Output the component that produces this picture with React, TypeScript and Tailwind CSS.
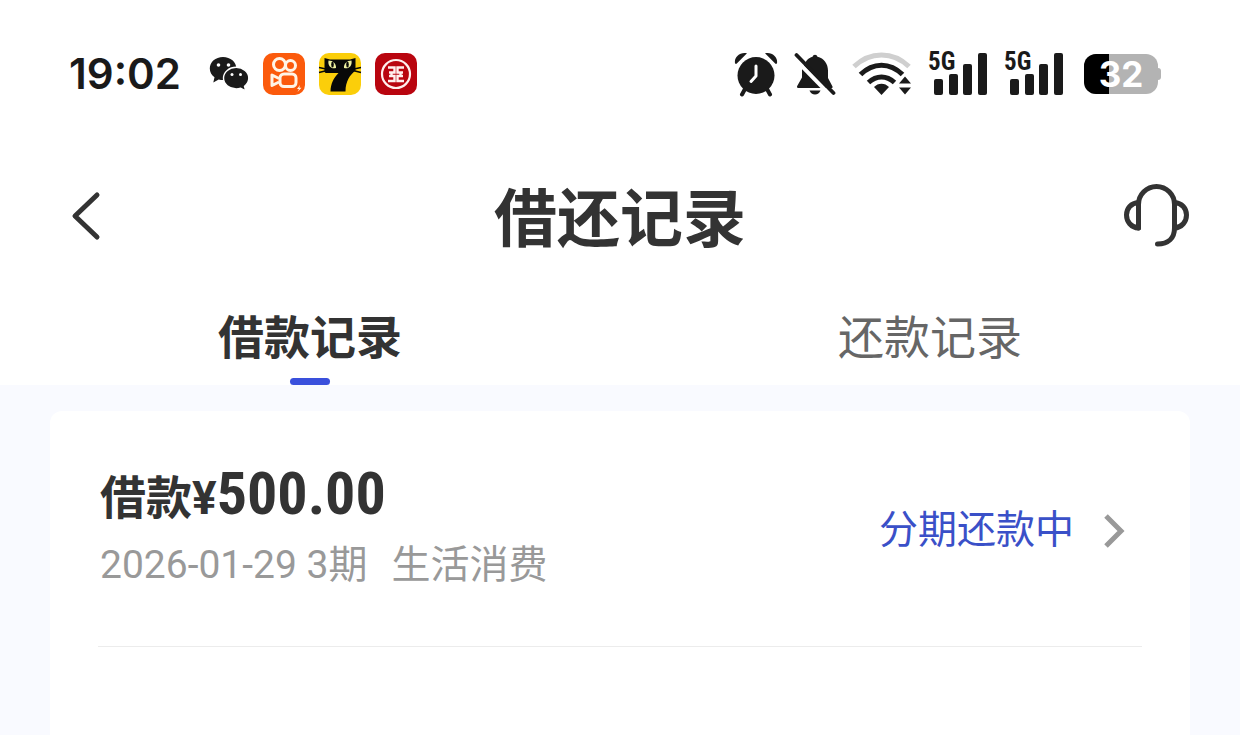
const cjk = "font-['Roboto','Noto_Sans_CJK_SC',sans-serif]"

function WechatIcon() {
  return (
    <svg viewBox="0 0 40 36" className="w-10 h-9" role="img" aria-label="微信">
      <path fill="#1a1a1a" d="M14 1C6.500 1 .8 6 .8 12.500c0 3.600 1.800 6.700 4.700 8.800L4.300 26.500l5.400-2.900c1.500.4 3 .5 4.600.5C21.500 24 27.400 19 27.400 12.500S21.500 1 14 1Z" />
      <path fill="#1a1a1a" stroke="#fff" strokeWidth="1.400" d="M27.200 11.300c-7 0-12.700 4.700-12.700 10.800s5.700 10.800 12.700 10.800c1.600 0 3.100-.2 4.500-.7l5 2.600-1.200-4.500c2.700-2 4.300-4.900 4.300-8.200 0-6.100-5.700-10.800-12.600-10.800Z" />
      <circle cx="9.500" cy="9" r="1.800" fill="#fff" />
      <circle cx="19.500" cy="9" r="1.800" fill="#fff" />
      <circle cx="23" cy="18.500" r="1.500" fill="#fff" />
      <circle cx="31.500" cy="18.500" r="1.500" fill="#fff" />
    </svg>
  )
}

function KuaishouIcon() {
  return (
    <svg viewBox="0 0 42 42" className="size-[42px]" role="img" aria-label="快手">
      <rect width="42" height="42" rx="10" fill="#fb5a0c" />
      <g fill="none" stroke="#fff4e6" strokeWidth="3">
        <circle cx="16.500" cy="11.500" r="6" />
        <circle cx="27.500" cy="12.500" r="5" />
        <rect x="17" y="21" width="16" height="12.500" rx="4" />
        <path d="M16 25.500 9 22v10.500l7-3.500" strokeLinejoin="round" />
      </g>
      <path fill="#fff4e6" d="m37 32-3 4h2l-1.500 3 4-4.200h-2.200Z" />
    </svg>
  )
}

function SevenCatIcon() {
  return (
    <svg viewBox="0 0 42 42" className="size-[42px] overflow-visible" role="img" aria-label="七猫">
      <rect width="42" height="42" rx="10" fill="#fbce0a" />
      <path fill="#080808" d="M5.500 5 11 6.500h20L36.500 5v12.500C31 22 26.500 28 26.500 38.500H11.500c.3-8 3-13.500 8-18.500H7c-1 0-1.500-1-1.500-2Z" />
      <path fill="none" stroke="#080808" strokeWidth="1.400" d="M0 14.500 7 16M0 19.500l8-2M42 14.500 35 16M42 19.500l-8-2" />
      <path fill="#eef0a0" d="M9.500 7.500c4.500 0 8 3.500 7.500 7.500-4.500 1.500-8.500-2-7.500-7.500ZM32.500 7.500c-4.500 0-8 3.500-7.500 7.500 4.500 1.500 8.500-2 7.500-7.500Z" />
      <ellipse cx="13.500" cy="11.500" rx="1.300" ry="3" fill="#080808" />
      <ellipse cx="28.500" cy="11.500" rx="1.300" ry="3" fill="#080808" />
    </svg>
  )
}

function IcbcIcon() {
  return (
    <svg viewBox="0 0 42 42" className="size-[42px]" role="img" aria-label="中国工商银行">
      <rect width="42" height="42" rx="10" fill="#b9050f" />
      <circle cx="21" cy="21" r="14" fill="none" stroke="#fff0ee" strokeWidth="2.200" />
      <path fill="none" stroke="#fff0ee" strokeWidth="2.400" d="M13 14.500h6.500v5H14M13 28h6.500v-5H14M29 14.500h-6.500v5H28M29 28h-6.500v-5H28" />
      <path stroke="#fff0ee" strokeWidth="2.400" d="M16.500 19v4.500M25.500 19v4.500" />
    </svg>
  )
}

function AlarmIcon() {
  return (
    <svg viewBox="0 0 44 46" className="w-11 h-[46px]" role="img" aria-label="闹钟">
      <g fill="#1a1a1a">
        <circle cx="22" cy="24.500" r="18.500" />
        <path d="M1 12C0 6 6 .5 13 2.200L2.800 12.600C2.200 13.200 1.200 13 1 12ZM43 12C44 6 38 .5 31 2.200l10.200 10.400c.6.600 1.600.4 1.800-.6Z" />
      </g>
      <path d="m11 38-3 5.500M33 38l3 5.500" stroke="#1a1a1a" strokeWidth="4" strokeLinecap="round" />
      <path d="M22 15v10l-5 5.500" fill="none" stroke="#fff" strokeWidth="3" strokeLinecap="round" strokeLinejoin="round" />
    </svg>
  )
}

function MutedIcon() {
  return (
    <svg viewBox="0 0 42 44" className="w-[42px] h-11" role="img" aria-label="静音">
      <path fill="#1a1a1a" d="M10 13.500c1.600-4.500 4.500-7.800 8.500-8.800a2.600 2.600 0 0 1 5 0c6.500 1.500 10.500 7 10.500 14V26l4.500 8.500c.3 1-.2 1.500-1 1.500H4.500C3 36 2.600 35 3.200 34L8 25.500V18c0-1.600.7-3 2-4.500Z" />
      <path fill="#1a1a1a" d="M15.500 38.500h11c-1 2.500-3 4-5.500 4s-4.500-1.500-5.500-4Z" />
      <path d="m-1 5 40 41" stroke="#fff" strokeWidth="4" />
      <path d="m2.500 3 37 38" stroke="#1a1a1a" strokeWidth="3.800" strokeLinecap="round" />
    </svg>
  )
}

function WifiIcon() {
  return (
    <svg viewBox="0 0 60 44" className="w-[60px] h-11" role="img" aria-label="无线网络">
      <g fill="none" strokeWidth="5">
        <path d="M2 14.500C18-1 41-1 57 14.500" stroke="#cfcfcf" />
        <path d="M8.500 22.500C21 10 38 10 50.500 22.500" stroke="#1a1a1a" />
        <path d="M16.500 30.500c8-7.500 18-7.500 26 0" stroke="#1a1a1a" />
      </g>
      <path fill="#1a1a1a" d="M22 35c4-4.500 11-4.500 15 0L29.500 43ZM47 31.500l6-7 6 7ZM47 35.500l6 7 6-7Z" />
    </svg>
  )
}

function SignalIcon() {
  return (
    <div className="relative w-[60px] h-11">
      <svg viewBox="0 0 60 44" className="w-full h-full" role="img" aria-label="信号" fill="#1a1a1a">
        <rect x="6" y="27" width="9" height="16" rx="2" />
        <rect x="21" y="22" width="9" height="21" rx="2" />
        <rect x="35" y="12" width="9" height="31" rx="2" />
        <rect x="50" y="1" width="9" height="42" rx="2" />
      </svg>
      <span className="absolute left-0 top-0 font-['Roboto_Condensed','Roboto',sans-serif] text-[25px] leading-5 font-bold text-[#1a1a1a]">5G</span>
    </div>
  )
}

function Battery() {
  return (
    <div className="flex items-center ml-1">
      <div className="relative w-[74px] h-10 rounded-xl overflow-hidden bg-[#b3b3b3]">
        <div className="h-full w-1/3 bg-black" />
        <span className="absolute inset-0 text-center font-['Inter',sans-serif] text-[35px] leading-10 font-bold text-white">32</span>
      </div>
      <div className="w-[3px] h-3 rounded-r bg-[#b3b3b3]" />
    </div>
  )
}

function StatusBar() {
  return (
    <div className="flex items-center justify-between h-[148px] pl-[69px] pr-[79px]">
      <div className="flex items-center gap-[14px]">
        <span className="mr-[14px] font-['Inter',sans-serif] text-[42px] leading-10 font-semibold text-[#1a1a1a]">19:02</span>
        <WechatIcon />
        <KuaishouIcon />
        <SevenCatIcon />
        <IcbcIcon />
      </div>
      <div className="flex items-center gap-4">
        <AlarmIcon />
        <MutedIcon />
        <WifiIcon />
        <SignalIcon />
        <SignalIcon />
        <Battery />
      </div>
    </div>
  )
}

function Header() {
  return (
    <header className="grid grid-cols-[1fr_auto_1fr] items-center h-[136px] px-[50px]">
      <button type="button" aria-label="返回" className="justify-self-start pl-5">
        <svg viewBox="0 0 32 52" className="w-8 h-[52px]" fill="none" stroke="#333" strokeWidth="5" strokeLinecap="round" strokeLinejoin="round">
          <path d="M27 5 5 26l22 21" />
        </svg>
      </button>
      <h1 className="pt-2 text-[63px] leading-[72px] font-bold">借还记录</h1>
      <button type="button" aria-label="客服" className="justify-self-end">
        <svg viewBox="0 0 68 68" className="size-[68px]" fill="none" stroke="#333" strokeWidth="5" strokeLinecap="round" strokeLinejoin="round">
          <path d="M16.500 46V22.500a18 18 0 0 1 36 0V46c0 10-6 16-17 16" />
          <path d="M16.500 20.500C9 21 4.500 26.500 4.500 33s4.500 12.500 12 13M52.500 20.500c7.500.5 12 6 12 12.500s-4.500 12.500-12 13" />
        </svg>
      </button>
    </header>
  )
}

function Tabs() {
  return (
    <nav className="grid grid-cols-2 text-[46px] leading-[68px]">
      <button type="button" className="flex flex-col items-center h-[101px] pt-5 font-bold">
        借款记录
        <span className="mt-[6px] w-10 h-[7px] rounded-full bg-[#3a50dc]" />
      </button>
      <button type="button" className="flex flex-col items-center h-[101px] pt-5 text-[#666]">还款记录</button>
    </nav>
  )
}

function LoanRecord() {
  return (
    <a href="#detail" className="flex items-center justify-between h-[236px] pl-0.5 pr-4 border-b border-[#ececec]">
      <div>
        <p className="flex items-baseline text-[46px] leading-[68px] font-bold">
          借款¥
          <span className="font-['Roboto_Condensed','Roboto',sans-serif] text-[60px]">500.00</span>
        </p>
        <p className="text-[39px] leading-[66px] text-[#999]">
          2026-01-29 3期<span className="ml-6">生活消费</span>
        </p>
      </div>
      <div className="flex items-center gap-7 pt-1 text-[39px] text-[#3a50c8]">
        分期还款中
        <svg viewBox="0 0 24 36" className="w-6 h-9" fill="none" stroke="#999" strokeWidth="5">
          <path d="m4 3 15 15L4 33" />
        </svg>
      </div>
    </a>
  )
}

export default function App() {
  return (
    <div className={`min-h-screen flex flex-col bg-white text-[#333] ${cjk}`} lang="zh-CN">
      <StatusBar />
      <Header />
      <Tabs />
      <main className="flex-1 flex flex-col bg-[#f9faff] px-[50px] pt-[26px]">
        <section className="flex-1 rounded-t-xl bg-white px-12">
          <LoanRecord />
        </section>
      </main>
    </div>
  )
}
